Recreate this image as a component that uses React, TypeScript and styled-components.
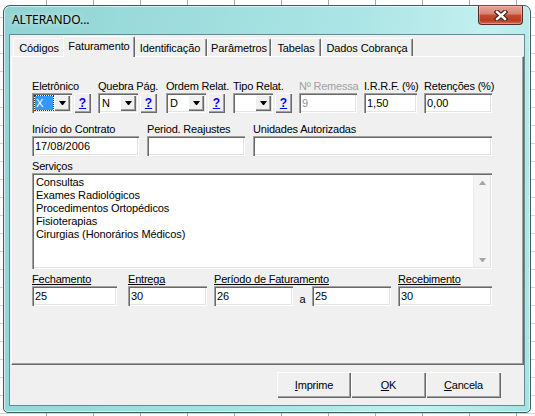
import React from 'react';
import styled, { createGlobalStyle, css } from 'styled-components';

const GlobalStyle = createGlobalStyle`
  html, body {
    margin: 0;
    padding: 0;
  }
  body {
    width: 535px;
    height: 416px;
    overflow: hidden;
    font-family: "Liberation Sans", Arial, sans-serif;
    font-size: 11px;
    color: #000;
  }
`;

// classic 3D borders
const sunken = css`
  box-sizing: border-box;
  background: #fff;
  box-shadow:
    inset 1px 1px 0 #a0a0a0,
    inset 2px 2px 0 #696969,
    inset -1px -1px 0 #fff,
    inset -2px -2px 0 #e3e3e3;
`;

const raised = css`
  box-sizing: border-box;
  background: #f0f0f0;
  box-shadow:
    inset 1px 1px 0 #fff,
    inset -1px -1px 0 #696969,
    inset -2px -2px 0 #a0a0a0;
`;

const Desktop = styled.div`
  width: 535px;
  height: 416px;
  box-sizing: border-box;
  padding: 5px 4px 3px 3px;
  display: flex;
  background-color: #fff;
  background-image:
    repeating-linear-gradient(to right, transparent 0 46px, #a8a8a8 46px 47px),
    repeating-linear-gradient(to bottom, transparent 0 17px, #d4d4d4 17px 18px);
`;

const Window = styled.div`
  flex: 1;
  display: flex;
  flex-direction: column;
  border: 1px solid #3e5c62;
  border-radius: 7px 7px 5px 5px;
  padding: 0 5px 6px 5px;
  background: linear-gradient(100deg, #8fd4d4 0%, #a0dede 35%, #ace5e5 60%, #c4f0f0 82%, #a6e2e2 100%);
  box-shadow: inset 0 0 0 1px rgba(255, 255, 255, 0.6);
`;

const TitleBar = styled.div`
  height: 28px;
  display: flex;
  justify-content: space-between;
  align-items: flex-start;
`;

const Title = styled.div`
  padding-left: 3px;
  line-height: 28px;
  font-family: "Noto Sans", "Open Sans", sans-serif;
  font-size: 12px;
  letter-spacing: -0.1px;
  text-shadow: 0 0 6px rgba(255, 255, 255, 0.9);
`;

const CloseButton = styled.div`
  width: 45px;
  height: 19px;
  margin-right: 2px;
  box-sizing: border-box;
  border: 1px solid #5a2a22;
  border-top: none;
  border-radius: 0 0 4px 4px;
  display: flex;
  align-items: center;
  justify-content: center;
  background: linear-gradient(to bottom, #e6a596 0%, #d98574 42%, #c54a30 52%, #b73c22 80%, #d26c4e 100%);
  box-shadow: inset 0 0 0 1px rgba(255, 200, 180, 0.45);
`;

const Client = styled.div`
  flex: 1;
  display: flex;
  flex-direction: column;
  background: #f0f0f0;
  border: 1px solid #5f8d92;
`;

const TabControl = styled.div`
  flex: 1;
  display: flex;
  flex-direction: column;
  margin: 1px 0 0 1px;
`;

const TabStrip = styled.div`
  height: 20px;
  display: flex;
  align-items: flex-end;
  padding-left: 2px;
`;

const Tab = styled.div<{ $w: number; $active?: boolean }>`
  box-sizing: border-box;
  width: ${p => (p.$active ? p.$w + 4 : p.$w)}px;
  height: ${p => (p.$active ? 21 : 18)}px;
  margin: ${p => (p.$active ? '0 -2px -1px -2px' : '0')};
  padding-bottom: ${p => (p.$active ? 3 : 0)}px;
  display: flex;
  align-items: center;
  justify-content: center;
  white-space: nowrap;
  letter-spacing: -0.1px;
  background: #f0f0f0;
  border-top: 1px solid #fff;
  border-left: 1px solid #fff;
  border-right: 1px solid #696969;
  border-radius: 2px 2px 0 0;
  box-shadow: inset -1px 0 0 #a0a0a0;
  position: relative;
  z-index: ${p => (p.$active ? 1 : 0)};
`;

const Panel = styled.div`
  flex: 1;
  display: flex;
  flex-direction: column;
  padding: 23px 0 0 20px;
  border-top: 1px solid #fff;
  border-left: 1px solid #fff;
  border-right: 1px solid #696969;
  border-bottom: 1px solid #696969;
  box-shadow: inset -1px -1px 0 #a0a0a0;
`;

const Row = styled.div<{ $gap: number; $mt?: number }>`
  display: flex;
  gap: ${p => p.$gap}px;
  margin-top: ${p => p.$mt ?? 0}px;
`;

const Field = styled.div<{ $w: number }>`
  width: ${p => p.$w}px;
  flex: none;
  display: flex;
  flex-direction: column;
`;

const Label = styled.div<{ $disabled?: boolean; $underline?: boolean }>`
  height: 13px;
  line-height: 13px;
  white-space: nowrap;
  letter-spacing: -0.2px;
  color: ${p => (p.$disabled ? '#a0a0a0' : '#000')};
  text-decoration: ${p => (p.$underline ? 'underline' : 'none')};
`;

const Inline = styled.div`
  display: flex;
  align-items: flex-end;
`;

const Combo = styled.div`
  ${sunken};
  width: 40px;
  height: 20px;
  padding: 2px;
  display: flex;
`;

const ComboValue = styled.div<{ $focused?: boolean }>`
  flex: 1;
  box-sizing: border-box;
  padding-left: ${p => (p.$focused ? 1 : 2)}px;
  line-height: ${p => (p.$focused ? 14 : 16)}px;
  ${p =>
    p.$focused &&
    css`
      margin: 1px;
      background: #3399ff;
      color: #fff;
      outline: 1px dotted #333;
    `}
`;

const DropButton = styled.div`
  ${raised};
  width: 16px;
  display: flex;
  align-items: center;
  justify-content: center;
`;

const HelpButton = styled.div`
  ${raised};
  width: 17px;
  height: 20px;
  margin-left: 2px;
  display: flex;
  align-items: center;
  justify-content: center;
  color: #0000ff;
  font-weight: bold;
  font-size: 12px;
  text-decoration: underline;
`;

const Edit = styled.div<{ $w?: number; $disabled?: boolean }>`
  ${sunken};
  width: ${p => (p.$w ? `${p.$w}px` : '100%')};
  height: 20px;
  padding: 2px 2px 0 3px;
  line-height: 16px;
  white-space: nowrap;
  color: ${p => (p.$disabled ? '#8e8e8e' : '#000')};
`;

const Memo = styled.div`
  ${sunken};
  width: 460px;
  height: 96px;
  padding: 2px;
  display: flex;
`;

const MemoLines = styled.div`
  flex: 1;
  padding: 1px 2px;
  line-height: 13px;
  letter-spacing: -0.1px;
`;

const ScrollBar = styled.div`
  width: 17px;
  background: #f4f4f4;
  border-left: 1px solid #ececec;
  display: flex;
  flex-direction: column;
  justify-content: space-between;
  align-items: center;
  padding: 6px 0 5px;
  box-sizing: border-box;
`;

const Joiner = styled.div`
  width: 19px;
  text-align: center;
  line-height: 14px;
`;

const ButtonBar = styled.div`
  height: 40px;
  box-sizing: border-box;
  padding: 7px 23px 0 0;
  display: flex;
  justify-content: flex-end;
  align-items: flex-start;
`;

const PushButton = styled.div<{ $w: number }>`
  ${raised};
  width: ${p => p.$w}px;
  height: 26px;
  display: flex;
  align-items: center;
  justify-content: center;
  letter-spacing: -0.2px;
`;

const Arrow = ({ up, color = '#000' }: { up?: boolean; color?: string }) => (
  <svg width="7" height="4" viewBox="0 0 7 4">
    <polygon points={up ? '3,0 4,0 7,4 0,4' : '0,0 7,0 4,4 3,4'} fill={color} />
  </svg>
);

const CloseGlyph = () => (
  <svg width="14" height="11" viewBox="0 0 14 11">
    <path d="M3 2 L11 9 M11 2 L3 9" stroke="#3a2420" strokeWidth="4.6" strokeLinecap="square" />
    <path d="M3 2 L11 9 M11 2 L3 9" stroke="#fff" strokeWidth="2.4" strokeLinecap="square" />
  </svg>
);

const tabs = [
  { label: 'Códigos', w: 52 },
  { label: 'Faturamento', w: 68, active: true },
  { label: 'Identificação', w: 74 },
  { label: 'Parâmetros', w: 64 },
  { label: 'Tabelas', w: 50 },
  { label: 'Dados Cobrança', w: 92 },
];

const combos = [
  { label: 'Eletrônico', value: 'X', w: 59, focused: true },
  { label: 'Quebra Pág.', value: 'N', w: 61 },
  { label: 'Ordem Relat.', value: 'D', w: 60 },
  { label: 'Tipo Relat.', value: '', w: 59 },
];

const servicos = [
  'Consultas',
  'Exames Radiológicos',
  'Procedimentos Ortopédicos',
  'Fisioterapias',
  'Cirurgias (Honorários Médicos)',
];

export default function App() {
  return (
    <>
      <GlobalStyle />
      <Desktop>
        <Window>
          <TitleBar>
            <Title>ALTERANDO...</Title>
            <CloseButton>
              <CloseGlyph />
            </CloseButton>
          </TitleBar>
          <Client>
            <TabControl>
              <TabStrip>
                {tabs.map(t => (
                  <Tab key={t.label} $w={t.w} $active={t.active}>
                    {t.label}
                  </Tab>
                ))}
              </TabStrip>
              <Panel>
                <Row $gap={7}>
                  {combos.map(c => (
                    <Field key={c.label} $w={c.w}>
                      <Label>{c.label}</Label>
                      <Inline>
                        <Combo>
                          <ComboValue $focused={c.focused}>{c.value}</ComboValue>
                          <DropButton>
                            <Arrow />
                          </DropButton>
                        </Combo>
                        <HelpButton>?</HelpButton>
                      </Inline>
                    </Field>
                  ))}
                  <Field $w={58}>
                    <Label $disabled>Nº Remessa</Label>
                    <Edit $disabled>9</Edit>
                  </Field>
                  <Field $w={53}>
                    <Label>I.R.R.F. (%)</Label>
                    <Edit>1,50</Edit>
                  </Field>
                  <Field $w={68}>
                    <Label>Retenções (%)</Label>
                    <Edit>0,00</Edit>
                  </Field>
                </Row>

                <Row $gap={8} $mt={10}>
                  <Field $w={107}>
                    <Label>Início do Contrato</Label>
                    <Edit>17/08/2006</Edit>
                  </Field>
                  <Field $w={98}>
                    <Label>Period. Reajustes</Label>
                    <Edit />
                  </Field>
                  <Field $w={239}>
                    <Label>Unidades Autorizadas</Label>
                    <Edit />
                  </Field>
                </Row>

                <Row $gap={0} $mt={4}>
                  <Field $w={460}>
                    <Label>Serviços</Label>
                    <Memo>
                      <MemoLines>
                        {servicos.map(s => (
                          <div key={s}>{s}</div>
                        ))}
                      </MemoLines>
                      <ScrollBar>
                        <Arrow up color="#a6a6a6" />
                        <Arrow color="#a6a6a6" />
                      </ScrollBar>
                    </Memo>
                  </Field>
                </Row>

                <Row $gap={7} $mt={4}>
                  <Field $w={89}>
                    <Label $underline>Fechamento</Label>
                    <Edit $w={85}>25</Edit>
                  </Field>
                  <Field $w={79}>
                    <Label $underline>Entrega</Label>
                    <Edit>30</Edit>
                  </Field>
                  <Field $w={177}>
                    <Label $underline>Período de Faturamento</Label>
                    <Inline>
                      <Edit $w={79}>26</Edit>
                      <Joiner>a</Joiner>
                      <Edit $w={79}>25</Edit>
                    </Inline>
                  </Field>
                  <Field $w={94}>
                    <Label $underline>Recebimento</Label>
                    <Edit>30</Edit>
                  </Field>
                </Row>
              </Panel>
            </TabControl>
            <ButtonBar>
              <PushButton $w={74}>
                <u>I</u>mprime
              </PushButton>
              <PushButton $w={75}>
                <u>O</u>K
              </PushButton>
              <PushButton $w={75}>
                <u>C</u>ancela
              </PushButton>
            </ButtonBar>
          </Client>
        </Window>
      </Desktop>
    </>
  );
}
